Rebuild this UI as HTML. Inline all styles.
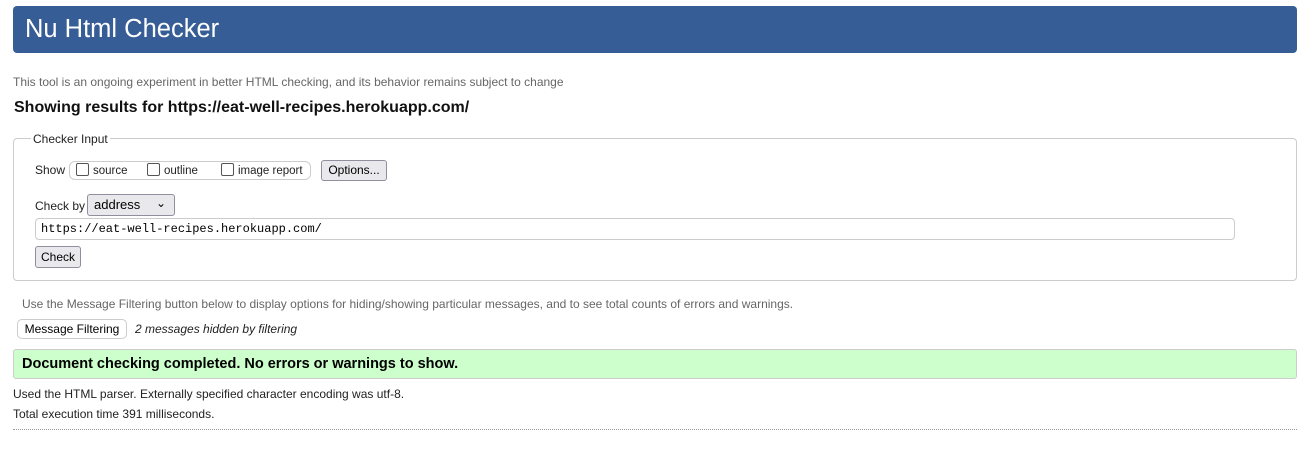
<!DOCTYPE html>
<html><head><meta charset="utf-8"><style>
body{margin:0;width:1306px;height:457px;background:#fff;font-family:"Liberation Sans",Arial,sans-serif;position:relative;overflow:hidden}
.a{position:absolute;white-space:nowrap}
.hdr{left:13px;top:6px;width:1284px;height:47px;background:#365d95;border-radius:4px;color:#fff;font-size:25.5px;line-height:47px;padding-left:12px;box-sizing:border-box}
.btn{background:#e9e9ed;border:1px solid #8f8f9d;border-radius:3px;font-size:12px;box-sizing:border-box;text-align:center}
.cb{display:inline-block;width:11px;height:11px;border:1px solid #555;border-radius:2px;vertical-align:-2px;margin-right:4px}
</style></head><body>
<div class="a hdr">Nu Html Checker</div>
<div class="a" style="left:13px;top:75px;font-size:12px;color:#666">This tool is an ongoing experiment in better HTML checking, and its behavior remains subject to change</div>
<div class="a" style="left:14px;top:99px;font-size:16px;font-weight:bold;color:#111">Showing results for https://eat-well-recipes.herokuapp.com/</div>
<div class="a" style="left:13px;top:138px;width:1284px;height:143px;border:1px solid #ccc;border-radius:4px;box-sizing:border-box"></div>
<div class="a" style="left:31px;top:132px;font-size:12px;background:#fff;padding:0 2px;color:#222">Checker Input</div>
<div class="a" style="left:35px;top:163px;font-size:12px;color:#222">Show</div>
<div class="a" style="left:69px;top:161px;width:242px;height:19px;border:1px solid #ccc;border-radius:6px;box-sizing:border-box"></div>
<div class="a" style="left:76px;top:163px;font-size:11.5px;color:#222"><span class="cb"></span>source</div>
<div class="a" style="left:147px;top:163px;font-size:11.5px;color:#222"><span class="cb"></span>outline</div>
<div class="a" style="left:221px;top:163px;font-size:11.5px;color:#222"><span class="cb"></span>image report</div>
<div class="a btn" style="left:321px;top:160px;width:66px;height:21px;line-height:19px">Options...</div>
<div class="a" style="left:35px;top:199px;font-size:12px;color:#222">Check by</div>
<div class="a btn" style="left:87px;top:194px;width:88px;height:22px;line-height:20px;text-align:left;padding-left:6px;font-size:13px">address<span style="position:absolute;right:8px;top:-2px;font-size:12px">&#8964;</span></div>
<div class="a" style="left:35px;top:218px;width:1200px;height:22px;border:1px solid #ccc;border-radius:4px;box-sizing:border-box;font-family:'Liberation Mono',monospace;font-size:12px;line-height:21px;padding-left:5px">https://eat-well-recipes.herokuapp.com/</div>
<div class="a btn" style="left:35px;top:246px;width:46px;height:22px;line-height:21px">Check</div>
<div class="a" style="left:22px;top:297px;font-size:12px;color:#666">Use the Message Filtering button below to display options for hiding/showing particular messages, and to see total counts of errors and warnings.</div>
<div class="a" style="left:17px;top:319px;width:110px;height:20px;border:1px solid #ccc;border-radius:5px;box-sizing:border-box;font-size:12px;line-height:19px;text-align:center">Message Filtering</div>
<div class="a" style="left:135px;top:322px;font-size:12px;font-style:italic;color:#222">2 messages hidden by filtering</div>
<div class="a" style="left:13px;top:349px;width:1284px;height:30px;background:#ccffcc;border:1px solid #ccc;border-radius:3px;box-sizing:border-box;font-size:14.5px;font-weight:bold;line-height:28px;padding-left:8px">Document checking completed. No errors or warnings to show.</div>
<div class="a" style="left:13px;top:387px;font-size:12px;color:#222">Used the HTML parser. Externally specified character encoding was utf-8.</div>
<div class="a" style="left:13px;top:407px;font-size:12px;color:#222">Total execution time 391 milliseconds.</div>
<div class="a" style="left:13px;top:429px;width:1284px;border-top:1px dotted #999"></div>
</body></html>
